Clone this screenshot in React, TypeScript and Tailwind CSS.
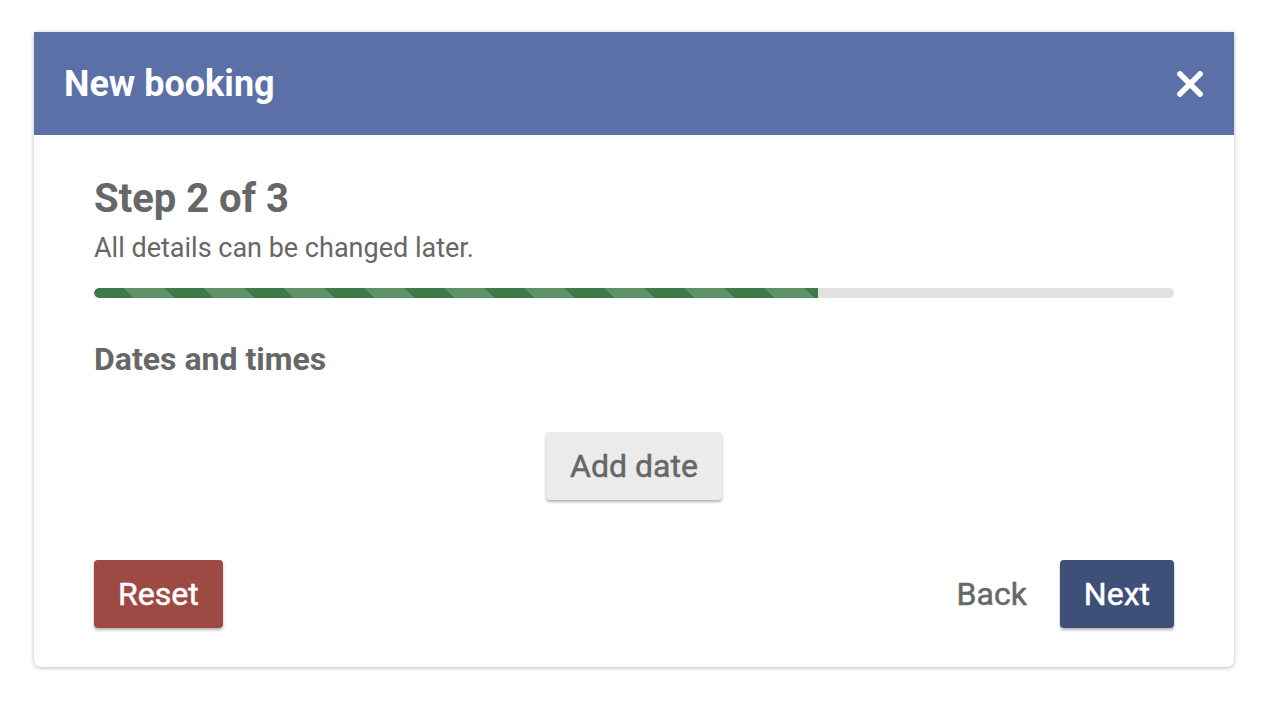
import React from "react";

export default function App() {
  const progress = 67;
  return (
    <div className="min-h-[708px] w-full bg-white pt-[32px] pl-[34px]" style={{ fontFamily: "Roboto, 'Noto Sans', sans-serif" }}>
      <div className="w-[1200px] rounded-b-[7px] bg-white shadow-[0_1px_4px_rgba(0,0,0,0.28)] overflow-hidden">
        <div className="flex h-[103px] items-center justify-between bg-[#5a70a6] pl-[30px] pr-[30px]">
          <h1 className="text-[36px] font-bold leading-none text-white">New booking</h1>
          <svg width="26" height="26" viewBox="0 0 26 26" className="mr-[1px]">
            <path d="M3 3 L23 23 M23 3 L3 23" stroke="#ffffff" strokeWidth="5.5" strokeLinecap="square" />
          </svg>
        </div>
        <div className="px-[60px] pt-[41px] pb-[39px]">
          <div className="text-[40px] font-bold leading-[46px] text-[#666766]">Step 2 of 3</div>
          <div className="mt-[11px] text-[27px] leading-[31px] text-[#666766]">All details can be changed later.</div>
          <div className="mt-[24px] h-[10px] w-full overflow-hidden rounded-full bg-[#e1e1e1]">
            <div
              className="h-full rounded-l-full bg-[image:repeating-linear-gradient(45deg,#3d7a47_0px,#3d7a47_28.28px,#5f9168_28.28px,#5f9168_56.57px)]"
              style={{ width: `${progress}%` }}
            />
          </div>
          <div className="mt-[43px] text-[32px] font-bold leading-[37px] text-[#666766]">Dates and times</div>
          <div className="mt-[54px] flex justify-center">
            <button className="h-[68px] rounded-[4px] bg-[#ebebeb] px-[24px] text-[32px] font-normal text-[#666766] [-webkit-text-stroke:0.5px_currentColor] shadow-[0_2px_3px_rgba(0,0,0,0.3)]">
              Add date
            </button>
          </div>
          <div className="mt-[60px] flex items-center justify-between">
            <button className="h-[68px] rounded-[4px] bg-[#9e4a44] px-[24px] text-[32px] font-normal text-white [-webkit-text-stroke:0.5px_currentColor] shadow-[0_2px_3px_rgba(0,0,0,0.3)]">
              Reset
            </button>
            <div className="flex items-center gap-[9px]">
              <button className="h-[68px] rounded-[4px] px-[24px] text-[32px] font-normal text-[#666766] [-webkit-text-stroke:0.5px_currentColor]">Back</button>
              <button className="h-[68px] rounded-[4px] bg-[#3e4f78] px-[24px] text-[32px] font-normal text-white [-webkit-text-stroke:0.5px_currentColor] shadow-[0_2px_3px_rgba(0,0,0,0.3)]">
                Next
              </button>
            </div>
          </div>
        </div>
      </div>
    </div>
  );
}
